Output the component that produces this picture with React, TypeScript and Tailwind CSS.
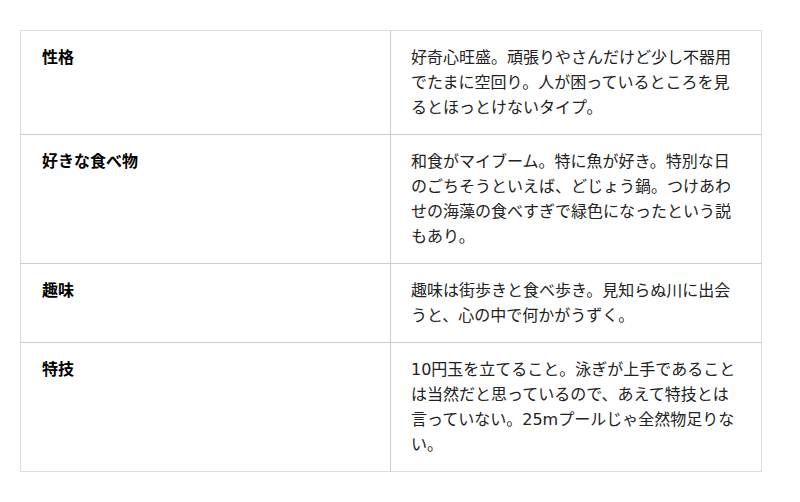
const rows = [
  {
    label: "性格",
    text: "好奇心旺盛。頑張りやさんだけど少し不器用でたまに空回り。人が困っているところを見るとほっとけないタイプ。",
  },
  {
    label: "好きな食べ物",
    text: "和食がマイブーム。特に魚が好き。特別な日のごちそうといえば、どじょう鍋。つけあわせの海藻の食べすぎで緑色になったという説もあり。",
  },
  {
    label: "趣味",
    text: "趣味は街歩きと食べ歩き。見知らぬ川に出会うと、心の中で何かがうずく。",
  },
  {
    label: "特技",
    text: "10円玉を立てること。泳ぎが上手であることは当然だと思っているので、あえて特技とは言っていない。25mプールじゃ全然物足りない。",
  },
];

export default function App() {
  return (
    <div className="min-h-[502px] bg-white pl-5 pt-[30px] font-['DejaVu_Sans','Noto_Sans_CJK_JP',sans-serif] text-[16px] leading-[25px] text-[#222]">
      <table className="w-[742px] table-fixed border-collapse border border-[#ddd]">
        <tbody>
          {rows.map((r) => (
            <tr key={r.label} className="border-b border-[#ccc] last:border-b-[#ddd]">
              <th className="w-[370px] border-r border-[#ccc] px-[21px] py-[14px] text-left align-top font-bold text-black">
                {r.label}
              </th>
              <td className="px-5 py-[14px] align-top">{r.text}</td>
            </tr>
          ))}
        </tbody>
      </table>
    </div>
  );
}
